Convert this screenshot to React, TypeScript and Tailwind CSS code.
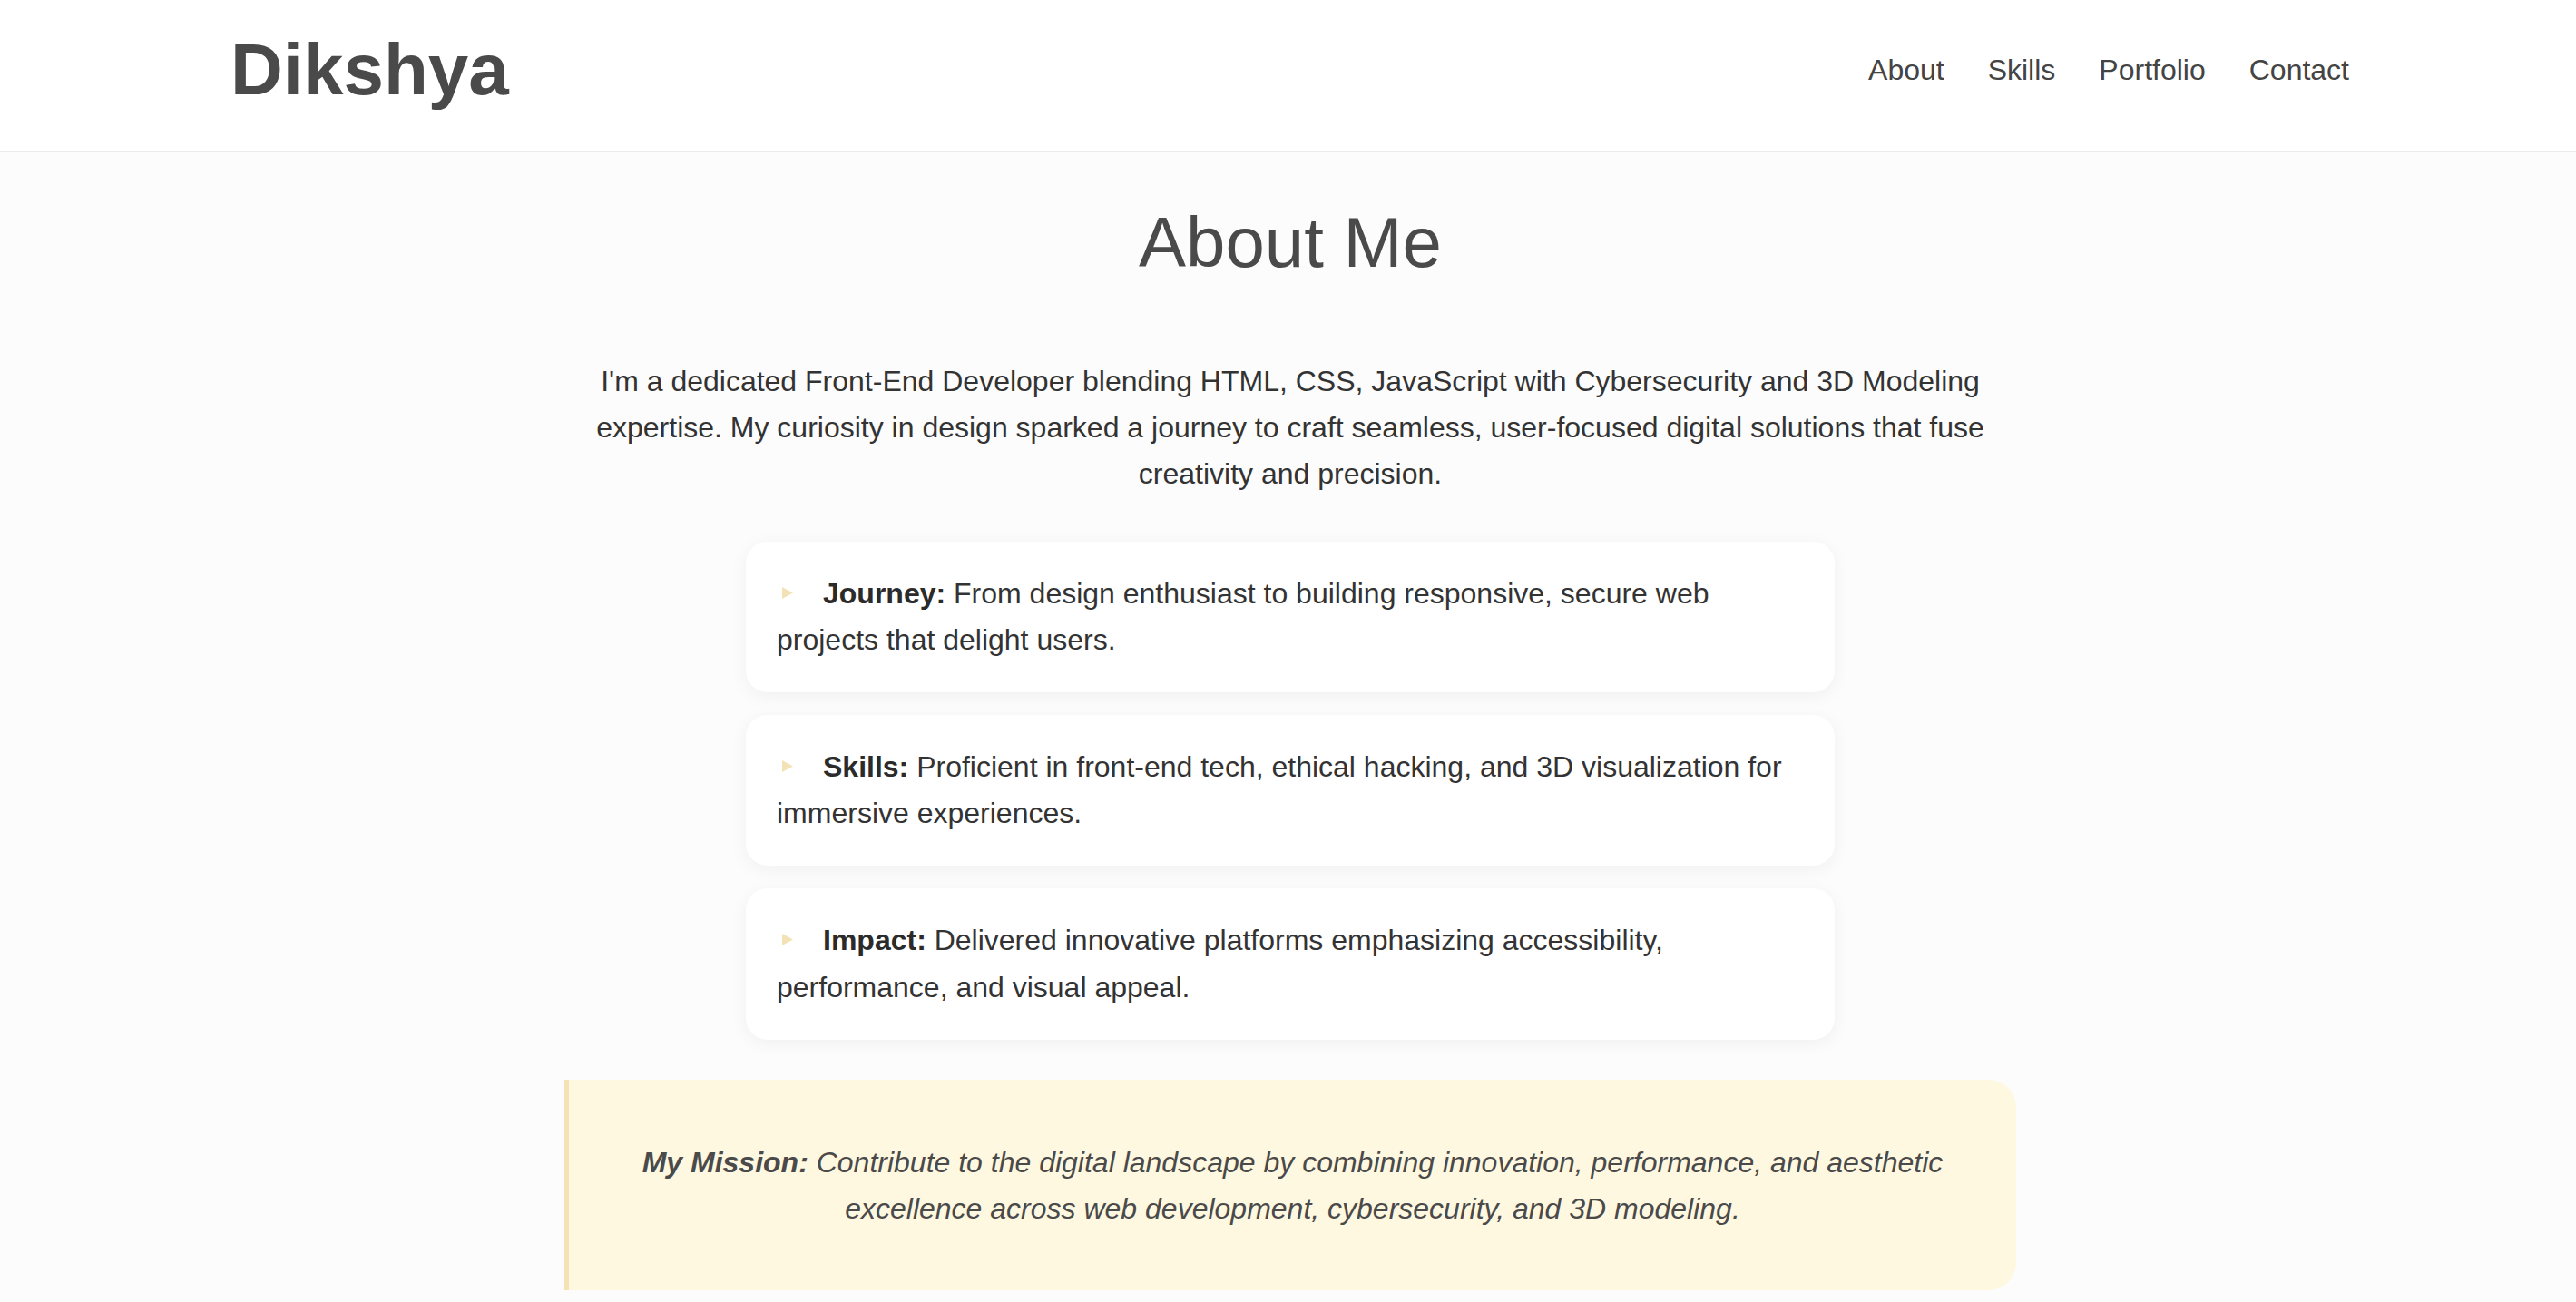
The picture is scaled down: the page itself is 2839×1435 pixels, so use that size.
const points = [
  {
    label: 'Journey:',
    text: 'From design enthusiast to building responsive, secure web projects that delight users.',
  },
  {
    label: 'Skills:',
    text: 'Proficient in front-end tech, ethical hacking, and 3D visualization for immersive experiences.',
  },
  {
    label: 'Impact:',
    text: 'Delivered innovative platforms emphasizing accessibility, performance, and visual appeal.',
  },
];

const navLinks = ['About', 'Skills', 'Portfolio', 'Contact'];

function Marker() {
  return (
    <span className="inline-block w-[51px] pl-[6px]">
      <svg width="12" height="13" viewBox="0 0 12 13" className="inline-block align-[5px]">
        <path d="M0 0 L12 6.5 L0 13 Z" fill="#f3e2b6" />
      </svg>
    </span>
  );
}

export default function App() {
  return (
    <div className="min-h-screen bg-[#fcfcfc] font-['Liberation_Sans',Arial,sans-serif]">
      {/* Header */}
      <header className="bg-white border-b-2 border-[#ececec]">
        <div className="flex items-center justify-between pl-[254px] pr-[250px] pt-[31px] pb-[43px]">
          <h1 className="text-[80px] font-bold leading-[92px] text-[#4a4a4a]">Dikshya</h1>
          <nav className="flex gap-12 text-[32px] text-[#444444]">
            {navLinks.map((link) => (
              <a key={link} href={`#${link.toLowerCase()}`}>
                {link}
              </a>
            ))}
          </nav>
        </div>
      </header>

      {/* About */}
      <section id="about" className="pt-[51px] pb-16 pl-[5px]">
        <h2 className="text-center text-[78px] leading-[96px] text-[#4a4a4a] mb-[80px]">About Me</h2>

        <p className="max-w-[1536px] mx-auto text-center text-[32px] leading-[1.6] text-[#333333]">
          I'm a dedicated Front-End Developer blending HTML, CSS, JavaScript with Cybersecurity and 3D Modeling
          expertise. My curiosity in design sparked a journey to craft seamless, user-focused digital solutions that
          fuse creativity and precision.
        </p>

        <ul className="w-[1200px] mx-auto mt-[48px] flex flex-col gap-[25px]">
          {points.map((p) => (
            <li
              key={p.label}
              className="bg-white rounded-[24px] shadow-[0_4px_20px_rgba(0,0,0,0.05)] px-[34px] py-8 text-[32px] leading-[1.6] text-[#333333]"
            >
              <Marker />
              <strong className="font-bold text-[#2b2b2b]">{p.label}</strong> {p.text}
            </li>
          ))}
        </ul>

        {/* Mission */}
        <div className="w-[1600px] mx-auto mt-[44px] bg-[#fff8e1] border-l-[5px] border-[#f5e3b5] rounded-r-[30px] px-16 pt-[66px] pb-[64px] text-center italic text-[32px] leading-[1.6] text-[#4a4a4a]">
          <strong className="font-bold">My Mission:</strong> Contribute to the digital landscape by combining
          innovation, performance, and aesthetic excellence across web development, cybersecurity, and 3D modeling.
        </div>
      </section>
    </div>
  );
}
